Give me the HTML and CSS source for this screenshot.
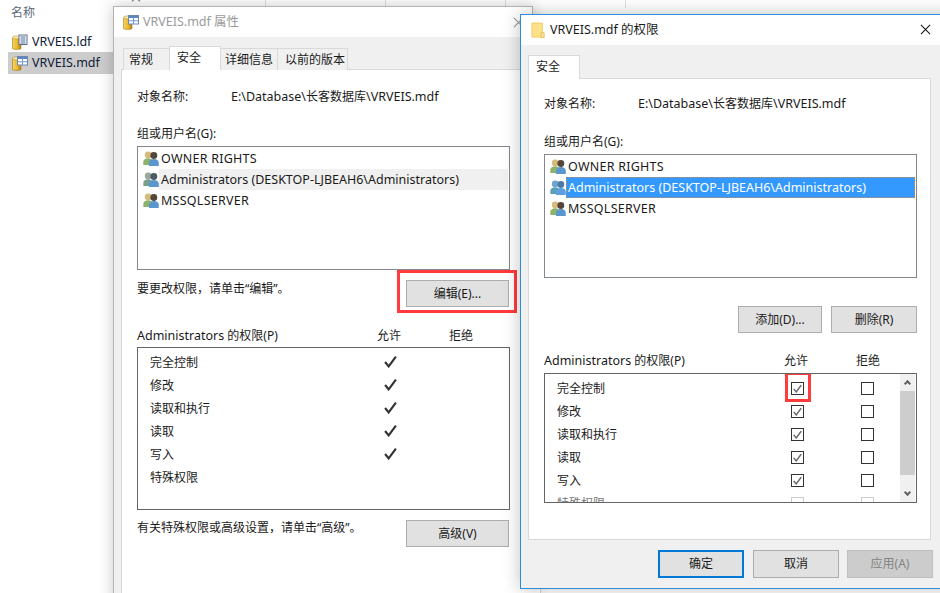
FILE: index.html
```html
<!DOCTYPE html>
<html lang="zh-CN">
<head>
<meta charset="utf-8">
<title>VRVEIS.mdf 权限</title>
<link rel="stylesheet" href="styles.css">
</head>
<body>
<svg class="defs" width="0" height="0" aria-hidden="true">
  <defs>
    <linearGradient id="gold" x1="0" x2="1" y1="0" y2="0">
      <stop offset="0" stop-color="#f6d264"/><stop offset=".55" stop-color="#ecb92f"/><stop offset="1" stop-color="#a87f1a"/>
    </linearGradient>
    <symbol id="db-table" viewBox="0 0 16 16">
      <path d="M0.500 3.500h8.500v11.200c-1 .9-7.500 .9-8.500 0z" fill="url(#gold)" stroke="#a67c1a" stroke-width=".6"/>
      <ellipse cx="4.700" cy="3.400" rx="4.200" ry="1.500" fill="#fbeaa6" stroke="#a67c1a" stroke-width=".5"/>
      <rect x="5.500" y="1.500" width="10" height="8.500" fill="#fff" stroke="#6f86ad"/>
      <path d="M6 2h9v2H6z" fill="#5b86c4"/>
      <path d="M10.500 4v6M6 6.800h9" stroke="#6f9ad0"/>
    </symbol>
    <symbol id="db-log" viewBox="0 0 16 16">
      <path d="M0.500 3.500h8.500v11.200c-1 .9-7.500 .9-8.500 0z" fill="url(#gold)" stroke="#a67c1a" stroke-width=".6"/>
      <ellipse cx="4.700" cy="3.400" rx="4.200" ry="1.500" fill="#fbeaa6" stroke="#a67c1a" stroke-width=".5"/>
      <rect x="7" y="1" width="8" height="9.500" fill="#fff" stroke="#5d6f8c"/>
      <path d="M8.500 3h5M8.500 5h5M8.500 7h5M8.500 9h5" stroke="#4d6a99"/>
    </symbol>
    <symbol id="folder" viewBox="0 0 16 18">
      <path d="M1 .5h12v16H1z" fill="#fde08a" stroke="#f0c85e"/>
      <path d="M11.500 11.500h3.500v5.500h-3.500z" fill="#fbe7a6" stroke="#e6b94c"/>
    </symbol>
    <symbol id="users" viewBox="0 0 17 16">
      <circle cx="5.500" cy="4.200" r="3.600" fill="#d6bb7c"/>
      <path d="M.3 15v-3.500c0-2.500 2.500-3.800 5.200-3.800s4.700 1.300 4.700 3.800V15z" fill="#8fb26a"/>
      <circle cx="11.500" cy="4.800" r="3.700" fill="#54463a"/>
      <path d="M6.300 16v-3.500c0-2.500 2.500-4 5.200-4s5.300 1.500 5.300 4V16z" fill="#5b97cf"/>
    </symbol>
    <symbol id="users-dim" viewBox="0 0 17 16">
      <circle cx="5.500" cy="4.200" r="3.600" fill="#9aa89a"/>
      <path d="M.3 15v-3.500c0-2.500 2.500-3.800 5.200-3.800s4.700 1.300 4.700 3.800V15z" fill="#76a08c"/>
      <circle cx="11.500" cy="4.800" r="3.700" fill="#4d5a66"/>
      <path d="M6.300 16v-3.500c0-2.500 2.500-4 5.200-4s5.300 1.500 5.300 4V16z" fill="#5b97cf"/>
    </symbol>
    <symbol id="users-sel" viewBox="0 0 17 16">
      <circle cx="5.500" cy="4.200" r="3.600" fill="#6fa6cf"/>
      <path d="M.3 15v-3.500c0-2.500 2.500-3.800 5.200-3.800s4.700 1.300 4.700 3.800V15z" fill="#5aa0b4"/>
      <circle cx="11.500" cy="4.800" r="3.700" fill="#4d7ba8"/>
      <path d="M6.300 16v-3.500c0-2.500 2.500-4 5.200-4s5.300 1.500 5.300 4V16z" fill="#5b9fe0"/>
    </symbol>
    <symbol id="tick" viewBox="0 0 12 12">
      <path d="M1 6.500 4.300 10.500 11 1.500" fill="none" stroke="currentColor" stroke-width="2"/>
    </symbol>
    <symbol id="x" viewBox="0 0 12 12">
      <path d="M1 1 11 11M11 1 1 11" fill="none" stroke="currentColor" stroke-width="1.100"/>
    </symbol>
  </defs>
</svg>

<div class="desktop">
  <span class="sort-mark"></span>
  <div class="top-rules"><i></i><i></i><i></i><i></i></div>

  <section class="explorer">
    <div class="col-head">名称</div>
    <div class="file"><svg class="ico16"><use href="#db-log"/></svg><span>VRVEIS.ldf</span></div>
    <div class="file file-selected"><svg class="ico16"><use href="#db-table"/></svg><span>VRVEIS.mdf</span></div>
  </section>

  <section class="window window-back">
    <header class="titlebar">
      <svg class="ico16"><use href="#db-table"/></svg>
      <span class="title">VRVEIS.mdf 属性</span>
      <svg class="close"><use href="#x"/></svg>
    </header>
    <div class="client">
      <nav class="tabs">
        <span class="tab">常规</span>
        <span class="tab tab-active">安全</span>
        <span class="tab">详细信息</span>
        <span class="tab">以前的版本</span>
      </nav>
      <div class="panel">
        <div class="object-row"><span class="object-label">对象名称:</span><span><span class="lat">E:\Database\</span>长客数据库<span class="lat">\VRVEIS.mdf</span></span></div>
        <div class="group-label">组或用户名(G):</div>
        <ul class="listbox">
          <li class="user"><svg class="ico-user"><use href="#users"/></svg><span class="caps">OWNER RIGHTS</span></li>
          <li class="user user-soft"><svg class="ico-user"><use href="#users-dim"/></svg><span class="user-name">Administrators (DESKTOP-LJBEAH6\Administrators)</span></li>
          <li class="user"><svg class="ico-user"><use href="#users"/></svg><span class="caps">MSSQLSERVER</span></li>
        </ul>
        <div class="action-row">
          <span class="action-note">要更改权限，请单击“编辑”。</span>
          <button class="btn btn-wide btn-flagged">编辑(E)...</button>
        </div>
        <div class="perm-head"><span class="perm-title"><span class="lat">Administrators</span> 的权限(P)</span><span class="perm-col">允许</span><span class="perm-col">拒绝</span></div>
        <ul class="permbox">
          <li class="perm"><span class="perm-name">完全控制</span><svg class="tick"><use href="#tick"/></svg></li>
          <li class="perm"><span class="perm-name">修改</span><svg class="tick"><use href="#tick"/></svg></li>
          <li class="perm"><span class="perm-name">读取和执行</span><svg class="tick"><use href="#tick"/></svg></li>
          <li class="perm"><span class="perm-name">读取</span><svg class="tick"><use href="#tick"/></svg></li>
          <li class="perm"><span class="perm-name">写入</span><svg class="tick"><use href="#tick"/></svg></li>
          <li class="perm"><span class="perm-name">特殊权限</span></li>
        </ul>
        <div class="advanced-row">
          <span>有关特殊权限或高级设置，请单击“高级”。</span>
          <button class="btn btn-wide">高级(V)</button>
        </div>
      </div>
    </div>
  </section>

  <section class="window window-front">
    <header class="titlebar titlebar-active">
      <svg class="ico-folder"><use href="#folder"/></svg>
      <span class="title">VRVEIS.mdf 的权限</span>
      <svg class="close close-active"><use href="#x"/></svg>
    </header>
    <div class="client client-front">
      <nav class="tabs"><span class="tab tab-active tab-only">安全</span></nav>
      <div class="panel panel-front">
        <div class="object-row"><span class="object-label">对象名称:</span><span><span class="lat">E:\Database\</span>长客数据库<span class="lat">\VRVEIS.mdf</span></span></div>
        <div class="group-label">组或用户名(G):</div>
        <ul class="listbox">
          <li class="user"><svg class="ico-user"><use href="#users"/></svg><span class="caps">OWNER RIGHTS</span></li>
          <li class="user user-sel"><svg class="ico-user"><use href="#users-sel"/></svg><span class="user-name">Administrators (DESKTOP-LJBEAH6\Administrators)</span></li>
          <li class="user"><svg class="ico-user"><use href="#users"/></svg><span class="caps">MSSQLSERVER</span></li>
        </ul>
        <div class="list-actions">
          <button class="btn btn-add">添加(D)...</button>
          <button class="btn btn-del">删除(R)</button>
        </div>
        <div class="perm-head perm-head-front"><span class="perm-title"><span class="lat">Administrators</span> 的权限(P)</span><span class="perm-col">允许</span><span class="perm-col">拒绝</span></div>
        <div class="permbox permbox-front">
          <ul class="perm-scroll">
            <li class="perm perm-front"><span class="perm-name">完全控制</span><span class="cb cb-flagged"><svg><use href="#tick"/></svg></span><span class="cb"></span></li>
            <li class="perm perm-front"><span class="perm-name">修改</span><span class="cb"><svg><use href="#tick"/></svg></span><span class="cb"></span></li>
            <li class="perm perm-front"><span class="perm-name">读取和执行</span><span class="cb"><svg><use href="#tick"/></svg></span><span class="cb"></span></li>
            <li class="perm perm-front"><span class="perm-name">读取</span><span class="cb"><svg><use href="#tick"/></svg></span><span class="cb"></span></li>
            <li class="perm perm-front"><span class="perm-name">写入</span><span class="cb"><svg><use href="#tick"/></svg></span><span class="cb"></span></li>
            <li class="perm perm-front perm-disabled"><span class="perm-name">特殊权限</span><span class="cb"></span><span class="cb"></span></li>
          </ul>
          <div class="scrollbar">
            <span class="arrow arrow-up"></span>
            <span class="thumb"></span>
            <span class="arrow arrow-down"></span>
          </div>
        </div>
      </div>
      <footer class="dialog-actions">
        <button class="btn btn-foot btn-default">确定</button>
        <button class="btn btn-foot">取消</button>
        <button class="btn btn-foot btn-disabled">应用(A)</button>
      </footer>
    </div>
  </section>
</div>
</body>
</html>
```
FILE: styles.css
```css
* , *::before, *::after { box-sizing: border-box; }
html, body { margin: 0; padding: 0; }
body {
  width: 940px; height: 593px; overflow: hidden; background: #fff;
  font: 12px/16px "Noto Sans", "Noto Sans CJK SC", sans-serif; color: #1a1a1a;
}
ul { list-style: none; margin: 0; padding: 0; }
.defs { position: absolute; }
.desktop { position: relative; width: 940px; height: 593px; overflow: hidden; background: #fff; }
.lat { font-size: 12.500px; }
.caps { font-size: 12.500px; letter-spacing: .25px; }

.sort-mark { position: absolute; left: 133px; top: -2px; width: 6px; height: 6px; border-left: 1px solid #666; border-top: 1px solid #666; transform: rotate(45deg); }
.top-rules { position: absolute; left: 265px; top: 0; display: flex; gap: 119px; }
.top-rules i { width: 1px; height: 8px; background: #e0e0e0; }

.explorer { width: 113px; padding: 3px 0 0 8px; }
.col-head { height: 28px; padding: 1px 0 0 3px; line-height: 18px; color: #5c6a78; }
.file { display: flex; align-items: center; height: 22px; gap: 4px; padding-left: 4px; margin-bottom: -1px; font-size: 12.500px; color: #10203a; }
.file-selected { background: #ccc; margin-bottom: 0; }
.ico16 { width: 16px; height: 16px; flex: none; }

.window { position: absolute; background: #fff; display: flex; flex-direction: column; }
.window-back {
  left: 113px; top: 6px; width: 420px; height: 660px;
  border: 1px solid #b4b4b4; box-shadow: 0 0 14px rgba(0,0,0,.22);
}
.window-front {
  left: 520px; top: 14px; width: 440px; height: 575px;
  border: 1px solid #2b8ce0; box-shadow: 0 0 16px rgba(0,0,0,.25);
}
.titlebar { height: 30px; flex: none; display: flex; align-items: center; padding-left: 9px; background: #fff; position: relative; }
.title { margin-left: 4px; font-size: 12.500px; color: #9a9a9a; }
.titlebar-active { height: 30px; padding-left: 10px; }
.titlebar-active .title { color: #1a1a1a; margin-left: 5px; }
.ico-folder { width: 14px; height: 17px; flex: none; }
.close { position: absolute; left: 399px; top: 10px; width: 11px; height: 11px; color: #999; }
.close-active { left: 399px; top: 9px; color: #111; }

.client { flex: 1; background: #f0f0f0; padding: 9px 0 0 7px; }
.client-front { padding: 10px 0 0 7px; }
.tabs { display: flex; height: 24px; position: relative; z-index: 1; align-items: flex-end; }
.tab {
  height: 22px; padding: 0 5px; line-height: 21px; background: #f0f0f0;
  border: 1px solid #d9d9d9; border-left-width: 0; border-bottom: 0;
  white-space: nowrap;
}
.tab:first-child { border-left-width: 1px; width: 47px; margin-left: 2px; }
.tab-active { height: 24px; width: 52px; background: #fff; padding-left: 7px; line-height: 21px; border-left: 1px solid #d9d9d9; margin-left: -1px; margin-right: -1px; position: relative; }
.tab-active + .tab { border-left-width: 0; padding-left: 6px; }
.tabs .tab-only { width: 52px; margin-left: 0; padding-left: 7px; }
.tabs .tab:nth-child(3) { width: 58px; padding-left: 5px; }
.tabs .tab:nth-child(4) { width: 70px; padding-left: 7px; }

.panel {
  width: 420px; height: 560px; margin-top: -1px; padding: 0 0 0 15px;
  background: #fff; border: 1px solid #d9d9d9;
}
.panel-front { width: 403px; height: 462px; }
.object-row { display: flex; height: 16px; margin-top: 19px; }
.panel-front .object-row { margin-top: 17px; }
.object-label { width: 94px; }
.group-label { height: 16px; margin-top: 21px; }
.panel-front .group-label { margin-top: 22px; }
.listbox { width: 373px; height: 124px; margin-top: 4px; padding: 1px; border: 1px solid #828790; background: #fff; }
.user { display: flex; align-items: center; height: 21px; padding-left: 4px; }
.ico-user { width: 16px; height: 15px; flex: none; }
.user-name { flex: 1; height: 21px; line-height: 21px; padding-left: 2px; font-size: 12.500px; }
.user > span:last-child { padding-left: 2px; }
.user-soft .user-name { background: #f0f0f0; }
.user-sel .user-name { background: #3399ff; color: #fff; outline: 1px dotted #d08a4a; outline-offset: -1px; }

.action-row { display: flex; justify-content: space-between; width: 372px; height: 27px; margin-top: 10px; }
.action-note { padding-top: 1px; }
.btn {
  font: inherit; color: #1a1a1a; height: 27px; background: #e1e1e1;
  border: 1px solid #adadad; padding: 0; display: block;
}
.btn-wide { width: 103px; }
.btn-flagged { position: relative; }
.btn-flagged::after {
  content: ""; position: absolute; left: -10px; top: -11px; width: 120px; height: 43px;
  border: 3px solid #ff3b3b; pointer-events: none;
}
.perm-head { display: flex; height: 16px; margin-top: 21px; }
.perm-title { width: 240px; }
.perm-col { width: 72px; }
.permbox { width: 373px; height: 163px; margin-top: 3px; padding: 3px 0 0 12px; border: 1px solid #646464; }
.perm { display: flex; align-items: center; height: 23px; }
.perm-name { width: 232px; }
.tick { width: 13px; height: 13px; color: #333; margin-top: -3px; margin-left: 2px; }
.advanced-row { display: flex; justify-content: space-between; width: 372px; height: 27px; margin-top: 10px; }

.list-actions { display: flex; justify-content: flex-end; gap: 9px; width: 373px; margin-top: 28px; }
.btn-add { width: 84px; }
.btn-del { width: 86px; }
.perm-head-front { margin-top: 20px; }
.permbox-front { height: 130px; margin-top: 4px; padding: 0; display: flex; overflow: hidden; position: relative; }
.perm-scroll { flex: 1; padding: 3px 0 0 12px; }
.perm-front .perm-name { width: 234px; }
.cb { position: relative; display: block; width: 13px; height: 13px; border: 1px solid #333; background: #fff; margin-right: 57px; flex: none; }
.cb svg { display: block; width: 9px; height: 9px; margin: 1px; color: #666; }
.perm-front .cb:last-child { margin-right: 0; }
.cb-flagged::after {
  content: ""; position: absolute; left: -7px; top: -11px; width: 26px; height: 30px;
  border: 3px solid #ff3b3b;
}
.perm-disabled .cb { border-color: #ccc; }
.perm-disabled { color: #777; }

.scrollbar { width: 15px; margin: 0 1px 0 0; background: #f0f0f0; display: flex; flex-direction: column; }
.thumb { height: 84px; background: #cdcdcd; flex: none; }
.arrow { height: 17px; flex: none; position: relative; }
.arrow-down { flex: 1; }
.arrow::before {
  content: ""; position: absolute; left: 5px; width: 5px; height: 5px;
  border-left: 2px solid #606060; border-top: 2px solid #606060;
  transform: rotate(45deg); top: 7px;
}
.arrow-down::before { transform: rotate(225deg); top: auto; bottom: 7px; }

.dialog-actions { display: flex; gap: 9px; padding: 10px 0 0 130px; }
.btn-foot { width: 86px; height: 28px; }
.btn-default { border: 2px solid #0078d7; }
.btn-disabled { background: #ccc; border-color: #bfbfbf; color: #838383; margin-left: -1px; }
```
